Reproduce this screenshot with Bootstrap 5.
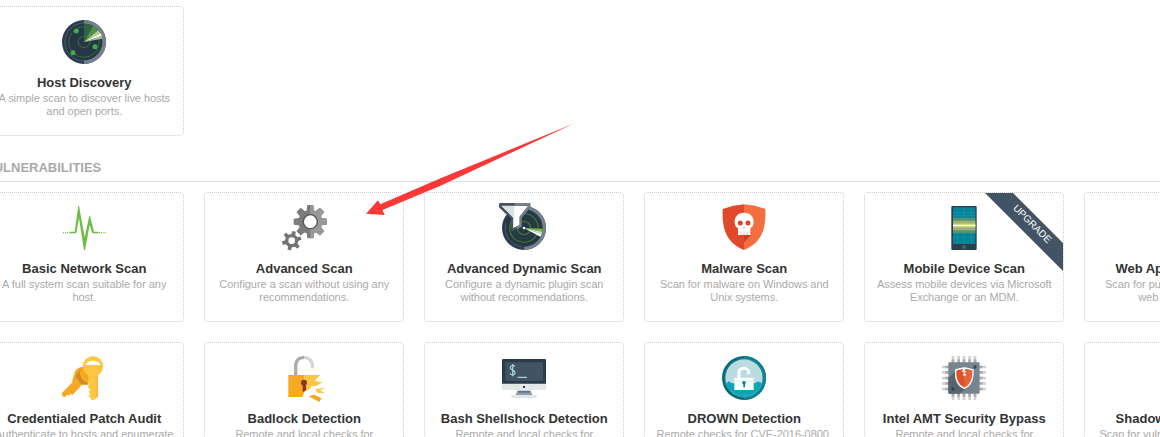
<!DOCTYPE html>
<html lang="en">
<head>
<meta charset="utf-8">
<title>Scan Templates</title>
<meta name="viewport" content="width=device-width, initial-scale=1">
<link rel="stylesheet" href="https://cdn.jsdelivr.net/npm/bootstrap@5.3.0/dist/css/bootstrap.min.css">
<style>
body{font-family:"Liberation Sans",Arial,sans-serif;height:437px;overflow:hidden;background:#fff}
.templates{margin-left:-16px;width:1320px;padding-top:6px}
.tiles{gap:20px}
.tiles + .tiles{margin-top:20px}
.tile{width:200px;height:130px;border:1px dotted #ccc;border-radius:4px;padding-top:13px;flex:none}
.tile-icon{width:44px;height:44px;display:block;flex:none}
.tile h2{font-size:13px;line-height:16px;font-weight:700;color:#333;margin:11px 0 1px;padding-left:.5px;white-space:nowrap}
.tile p{font-size:11px;line-height:13px;letter-spacing:-.04px;color:#aaa;margin:0;padding-left:.5px;white-space:nowrap}
.section-title{font-size:13px;line-height:16px;font-weight:700;color:#aaa;height:46px;padding:24px 0 0 1px;border-bottom:1px solid #ddd;margin:0 0 10px}
.ribbon{width:78px;height:78px;background:#425363;clip-path:polygon(0 0,28px 0,78px 50px,78px 78px)}
.ribbon span{left:47px;top:31px;transform:translate(-50%,-50%) rotate(45deg);font-size:10px;line-height:12px;color:#fff}
.pointer{left:0;top:0;width:1160px;height:437px;pointer-events:none}
</style>
</head>
<body class="position-relative">
<main class="templates">
  <section class="tiles d-flex">
    <article class="tile d-flex flex-column align-items-center text-center">
      <svg class="tile-icon" viewBox="186 60 132 132">
        <circle cx="252" cy="126" r="66" fill="#2b3b4a"/><path d="M252 60a66 66 0 0 1 0 132z" fill="#74808e"/>
        <circle cx="252" cy="126" r="55" fill="#253746"/>
        <path d="M252 69a57 57 0 0 0 0 114" fill="none" stroke="#5e7080" stroke-width="2"/>
        <g fill="none" stroke="#3c6d31" stroke-width="3"><circle cx="252" cy="126" r="46"/><circle cx="252" cy="126" r="17"/></g>
        <path d="M252 126V71A55 55 0 0 1 279 78z" fill="#2f6343"/><path d="M252 126L279 78A55 55 0 0 1 297 94z" fill="#538f46"/><path d="M252 126L295 91 302 101z" fill="#b2cc91"/><path d="M252 126L302 100 305 108z" fill="#fff"/><path d="M252 126L305 108 307 116z" fill="#9fc383"/>
        <g fill="#3fae49"><circle cx="229" cy="93" r="7.5"/><circle cx="285" cy="140" r="7.5"/><circle cx="219" cy="158" r="7.5"/></g>
      </svg>
      <h2>Host Discovery</h2><p>A simple scan to discover live hosts<br>and open ports.</p>
    </article>
  </section>

  <h1 class="section-title">VULNERABILITIES</h1>

  <section class="tiles d-flex">
    <article class="tile d-flex flex-column align-items-center text-center">
      <svg class="tile-icon" viewBox="186 168 132 132">
        <path d="M208 245H224L235 167H237L254 262 268 197H270L282 245H296V250H277L269 224 255 301H252L237 205 229 250H208z" fill="#6cbe45"/>
        <path d="M189 248h3m3 0h3m3 0h3m93 0h3m3 0h3m4 0h3m3 0h2" stroke="#6cbe45" stroke-width="4"/>
      </svg>
      <h2>Basic Network Scan</h2><p>A full system scan suitable for any<br>host.</p>
    </article>
    <article class="tile d-flex flex-column align-items-center text-center">
      <svg class="tile-icon overflow-visible" viewBox="36 30 132 132">
        <defs>
          <g id="gear"><circle r="36"/><g id="teeth"><path id="tooth" d="M-11-34L-9-50H9L11-34z"/><use href="#tooth" transform="rotate(45)"/><use href="#tooth" transform="rotate(90)"/><use href="#tooth" transform="rotate(135)"/></g><use href="#teeth" transform="rotate(180)"/></g>
          <clipPath id="right"><path d="M0-60H60V60H0z"/></clipPath>
        </defs>
        <g transform="translate(121 77)"><use href="#gear" fill="#7b7b7b"/><g clip-path="url(#right)"><use href="#gear" fill="#999"/></g><circle r="21" fill="#fff" stroke="#555" stroke-width="4"/></g>
        <g transform="translate(65 134)" fill="#737373"><circle r="20"/><g id="st"><path id="s" d="M-6-18L-5-29H5L6-18z" transform="rotate(15)"/><use href="#s" transform="rotate(60)"/><use href="#s" transform="rotate(120)"/></g><use href="#st" transform="rotate(180)"/><circle r="10" fill="#fff"/></g>
      </svg>
      <h2>Advanced Scan</h2><p>Configure a scan without using any<br>recommendations.</p>
    </article>
    <article class="tile d-flex flex-column align-items-center text-center">
      <svg class="tile-icon overflow-visible" viewBox="36 30 132 132">
        <circle cx="102" cy="96" r="66" fill="#2b3b4a"/><path d="M102 30a66 66 0 0 1 0 132z" fill="#74808e"/>
        <circle cx="102" cy="96" r="56" fill="#253746"/><path d="M48 82A56 56 0 0 0 96 152" fill="none" stroke="#5e7080" stroke-width="2"/>
        <g fill="none" stroke="#42742d" stroke-width="4"><circle cx="102" cy="96" r="20"/><circle cx="102" cy="96" r="43"/></g>
        <circle cx="102" cy="96" r="32" fill="none" stroke="#294c38" stroke-width="2"/>
        <path d="M102 96L158 98 157 107z" fill="#76b843"/><path d="M102 96L157 107 155 114z" fill="#d4dfb9"/><path d="M102 96L155 114 151 122z" fill="#fff"/>
        <path d="M31 25H117V33L91 64V90L67 101V66L31 32z" fill="#f0f2f2" stroke="#425363" stroke-width="8" stroke-linejoin="round"/>
        <path d="M74 25H117V33L91 64V90L80 96" fill="none" stroke="#74808e" stroke-width="8" stroke-linejoin="round"/>
        <path d="M35 30H73V94L69 97V65z" fill="#dce1e1"/><path d="M73 30H112L88 62V86L73 94z" fill="#fff"/>
        <circle cx="102" cy="96" r="4" fill="#fff"/>
      </svg>
      <h2>Advanced Dynamic Scan</h2><p>Configure a dynamic plugin scan<br>without recommendations.</p>
    </article>
    <article class="tile d-flex flex-column align-items-center text-center">
      <svg class="tile-icon overflow-visible" viewBox="36 30 132 132">
        <path d="M102 25Q70 27 38 39C36 92 44 138 102 162z" fill="#e04a2a"/><path d="M102 25Q134 27 166 39C168 92 160 138 102 162z" fill="#f36f40"/>
        <path d="M102 117H124L102 139z" fill="#c44428"/>
        <path d="M102 50C83 50 74 62 74 77C74 89 79 94 84 96V117H121V96C127 93 131 88 131 77C131 62 121 50 102 50z" fill="#fff"/>
        <circle cx="91" cy="81" r="7.5" fill="#d94527"/><circle cx="114" cy="81" r="7.5" fill="#d94527"/>
        <path d="M102 92L100 97H104z" fill="#e04a2a"/><path d="M93 109V117M102 109V117M112 109V117" stroke="#e88b75" stroke-width="2"/>
      </svg>
      <h2>Malware Scan</h2><p>Scan for malware on Windows and<br>Unix systems.</p>
    </article>
    <article class="tile position-relative d-flex flex-column align-items-center text-center">
      <svg class="tile-icon" viewBox="36 60 132 132">
        <rect x="64" y="60" width="76" height="132" rx="3" fill="#2b3e4e"/><path d="M69 64H136V174H69z" fill="#078198"/>
        <path d="M69 79H136M69 88H136M69 154H136M82 64V174M103 64V174M124 64V174" stroke="#0a9eae" stroke-width="2"/>
        <path d="M69 95H136V142H69z" fill="#4f937b"/><path d="M69 104H136V133H69z" fill="#a0b36c"/><path d="M69 113H136V124H69z" fill="#d2d98e"/><path d="M69 117H136V120H69z" fill="#fff"/>
        <circle cx="102" cy="183" r="5.5" fill="#657583"/><path d="M99 180L102 186L105 180" stroke="#2b3e4e" stroke-width="1.5" fill="none"/>
      </svg>
      <h2>Mobile Device Scan</h2><p>Assess mobile devices via Microsoft<br>Exchange or an MDM.</p>
      <div class="ribbon position-absolute top-0 end-0"><span class="position-absolute">UPGRADE</span></div>
    </article>
    <article class="tile d-flex flex-column align-items-center text-center">
      <div class="tile-icon"></div>
      <h2>Web Application Tests</h2><p>Scan for published and unknown<br>web vulnerabilities.</p>
    </article>
  </section>

  <section class="tiles d-flex">
    <article class="tile d-flex flex-column align-items-center text-center">
      <svg class="tile-icon" viewBox="36 18 132 132">
        <path d="M78 88L97 101 67 134 62 130 57 136 50 132 45 140 37 137 38 128z" fill="#f7a823" stroke="#f7a823" stroke-width="3" stroke-linejoin="round"/>
        <circle cx="99" cy="77" r="27" fill="#f7a823"/><path d="M97 49A30 30 0 0 0 113 98L114 104C92 107 78 96 75 82L86 65z" fill="#d28a27"/><path d="M72 75L92 100 82 109 66 93z" fill="#f7a823"/>
        <circle cx="129" cy="49" r="30.5" fill="#fdc640"/><path d="M115 71H144V138L134 149 123 150V145L116 138 121 132 116 126 121 119 115 113z" fill="#fdc640"/>
        <path d="M137 79V146L144 139V76z" fill="#f8bb3a"/><path d="M106 45C109 36 118 32 129 32S149 36 152 45Z" fill="#fff"/>
      </svg>
      <h2>Credentialed Patch Audit</h2><p>Authenticate to hosts and enumerate<br>missing updates.</p>
    </article>
    <article class="tile d-flex flex-column align-items-center text-center">
      <svg class="tile-icon overflow-visible" viewBox="36 18 132 132">
        <path d="M77 75V49C77 30 88 22 102 22" fill="none" stroke="#ababab" stroke-width="10"/><path d="M102 22C117 22 127 33 127 46V55" fill="none" stroke="#d5d5d5" stroke-width="10"/>
        <path d="M55 75H103V139L97 141H55z" fill="#f7a823"/><path d="M102 75H151L134 93 157 96 138 109 125 107 120 117 103 125z" fill="#fdc640"/>
        <path d="M103 125L97 141H104L118 124z" fill="#fff"/>
        <path d="M136 117L168 113 150 121 166 130 141 128z" fill="#fdc640"/><path d="M116 139L132 134 155 145 148 156z" fill="#f7a823"/>
        <circle cx="102" cy="98" r="9" fill="#803b28"/><path d="M98 102H107L109 119 101 126 98 124z" fill="#803b28"/>
      </svg>
      <h2>Badlock Detection</h2><p>Remote and local checks for<br>CVE-2016-2118.</p>
    </article>
    <article class="tile d-flex flex-column align-items-center text-center">
      <svg class="tile-icon" viewBox="36 18 132 132">
        <rect x="36" y="27" width="132" height="77" rx="4" fill="#283c4c"/><path d="M46 37H159V93H46z" fill="#425363"/>
        <path d="M36 101H168V116Q168 120 164 120H40Q36 120 36 116z" fill="#e5e8e8"/><rect x="99" y="108" width="6" height="6" fill="#283c4c"/>
        <path d="M82 122H122V130H82z" fill="#627381"/><path d="M78 128H126V136H78z" fill="#91a0aa"/><rect x="64" y="135" width="76" height="9" rx="4" fill="#e0e5e6"/>
        <path d="M75 49C70 44 61 46 61 53C61 62 75 59 75 68C75 75 65 77 60 71M68 42V79M83 82H111" fill="none" stroke="#a6d1d4" stroke-width="3.8"/>
      </svg>
      <h2>Bash Shellshock Detection</h2><p>Remote and local checks for<br>CVE-2014-6271 and CVE-2014-7169.</p>
    </article>
    <article class="tile d-flex flex-column align-items-center text-center">
      <svg class="tile-icon" viewBox="36 18 132 132">
        <circle cx="102" cy="84" r="66" fill="#056879"/><path d="M102 18a66 66 0 0 1 0 132z" fill="#078294"/>
        <circle cx="102" cy="84" r="56" fill="#b9dce0"/>
        <path d="M48 98Q54 99 57 93Q60 100 69 100H133Q141 99 144 93Q148 99 156 98A56 56 0 0 1 48 98z" fill="#06a6b7"/>
        <path d="M87 87V67C87 51 116 51 116 67V73" fill="none" stroke="#fff" stroke-width="9"/>
        <path d="M73 83H131V120H73z" fill="#fff"/><path d="M73 90Q79 97 84 89Q88 98 96 89Q102 97 108 89Q115 98 121 90Q126 97 131 91V96H73z" fill="#d8f0f2"/>
        <circle cx="102" cy="98" r="5" fill="#067b8d"/><path d="M100 100H105V112H100z" fill="#067b8d"/>
        <circle cx="102" cy="84" r="58" fill="none" stroke="#32929b" stroke-width="2"/>
      </svg>
      <h2>DROWN Detection</h2><p>Remote checks for CVE-2016-0800.</p>
    </article>
    <article class="tile d-flex flex-column align-items-center text-center">
      <svg class="tile-icon" viewBox="36 18 132 132">
        <path d="M69 18V150M86 18V150M102 18V150M119 18V150M135 18V150M36 51H168M36 67H168M36 84H168M36 100H168M36 117H168" stroke="#d2d2d2" stroke-width="8"/>
        <path d="M69 28V140M86 28V140M102 28V140M119 28V140M135 28V140M46 51H158M46 67H158M46 84H158M46 100H158M46 117H158" stroke="#adadad" stroke-width="8"/>
        <rect x="55" y="37" width="94" height="94" rx="3" fill="#788591"/><path d="M77 62L55 85V128Q55 131 58 131H89L113 111z" fill="#56656f"/>
        <circle cx="135" cy="51" r="5" fill="#33485a"/><circle cx="69" cy="117" r="5" fill="#2f4252"/>
        <path d="M103 54Q115 55 129 60C130 84 124 106 103 115C82 106 75 84 77 60Q91 55 103 54z" fill="#de5229" stroke="#fff" stroke-width="4"/>
        <path d="M103 57Q115 58 127 62C127 83 121 103 103 112z" fill="#e76437"/><path d="M99 56L96 65 103 68 98 76 106 77 101 89 109 73 103 72 108 64 103 62 106 56z" fill="#fff"/>
      </svg>
      <h2>Intel AMT Security Bypass</h2><p>Remote and local checks for<br>CVE-2017-5689.</p>
    </article>
    <article class="tile d-flex flex-column align-items-center text-center">
      <div class="tile-icon"></div>
      <h2>Shadow Brokers Scan</h2><p>Scan for vulnerabilities disclosed in<br>the Shadow Brokers leaks.</p>
    </article>
  </section>
</main>
<svg class="pointer position-absolute" viewBox="0 0 1160 437"><path d="M366 213.7L378 200.3 380.3 204.3 440 178.5 574.5 123.3 440 186 382.5 210 384.7 215z" fill="#fb3838"/></svg>
<script src="https://cdn.jsdelivr.net/npm/bootstrap@5.3.0/dist/js/bootstrap.bundle.min.js"></script>
</body>
</html>
